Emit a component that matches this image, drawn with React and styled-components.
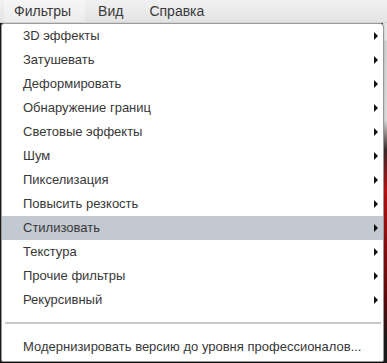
import React from 'react';
import styled, { createGlobalStyle } from 'styled-components';

const GlobalStyle = createGlobalStyle`
  html, body {
    margin: 0;
    padding: 0;
  }
  body {
    width: 387px;
    height: 363px;
    overflow: hidden;
    font-family: "Liberation Sans", Arial, sans-serif;
    background:
      linear-gradient(180deg, #e4e4e4 0px, #e4e4e4 40px, #cfcfcf 41px, #d9d9d9 120px, #3a2a2a 150px, #b31414 190px, #5a0b0b 300px, #1a1a1a 340px);
  }
`;

const Page = styled.div`
  width: 387px;
  height: 363px;
  display: flex;
  flex-direction: column;
  background: linear-gradient(90deg, #1e1a18 0px, #1e1a18 383px, transparent 383px);
`;

const MenuBar = styled.div`
  height: 23px;
  display: flex;
  align-items: stretch;
  padding-left: 4px;
  background: linear-gradient(180deg, #f1f1f1 0%, #e3e3e3 100%);
  border-bottom: 1px solid #d2d2d2;
  box-sizing: border-box;
`;

const MenuTitle = styled.div`
  display: flex;
  align-items: center;
  padding: 0 ${p => (p.$first ? '14px 1px 10px' : '13px 1px')};
  font-size: 14px;
  color: #3a3a3a;
  background: ${p => (p.$active ? 'linear-gradient(180deg, #f6f6f6 0%, #ececec 100%)' : 'transparent')};
`;

const Dropdown = styled.div`
  margin-left: 1px;
  width: 383px;
  height: 339px;
  box-sizing: border-box;
  background: #fff;
  border: 1px solid #9a9a9a;
  border-radius: 3px 4px 2px 2px;
  display: flex;
  flex-direction: column;
  box-shadow: 0 1px 1px rgba(0, 0, 0, 0.6);
`;

const Item = styled.div`
  height: 24px;
  flex: none;
  box-sizing: border-box;
  display: flex;
  align-items: center;
  justify-content: space-between;
  padding: 0 5px 2px 21px;
  font-size: 13px;
  color: #383838;
  background: ${p => (p.$hover ? '#c3c9d0' : 'transparent')};
`;

const Arrow = styled.span`
  width: 0;
  height: 0;
  margin-top: 2px;
  border-top: 4px solid transparent;
  border-bottom: 4px solid transparent;
  border-left: 4px solid #111;
`;

const Separator = styled.div`
  height: 2px;
  background: #c9c9c9;
  margin: 10px 2px 11px 3px;
  flex: none;
`;

const items = [
  '3D эффекты',
  'Затушевать',
  'Деформировать',
  'Обнаружение границ',
  'Световые эффекты',
  'Шум',
  'Пикселизация',
  'Повысить резкость',
  'Стилизовать',
  'Текстура',
  'Прочие фильтры',
  'Рекурсивный',
];

export default function App() {
  return (
    <>
      <GlobalStyle />
      <Page>
        <MenuBar>
          <MenuTitle $first $active>Фильтры</MenuTitle>
          <MenuTitle>Вид</MenuTitle>
          <MenuTitle>Справка</MenuTitle>
        </MenuBar>
        <Dropdown>
          {items.map(label => (
            <Item key={label} $hover={label === 'Стилизовать'}>
              {label}
              <Arrow />
            </Item>
          ))}
          <Separator />
          <Item>Модернизировать версию до уровня профессионалов...</Item>
        </Dropdown>
      </Page>
    </>
  );
}
